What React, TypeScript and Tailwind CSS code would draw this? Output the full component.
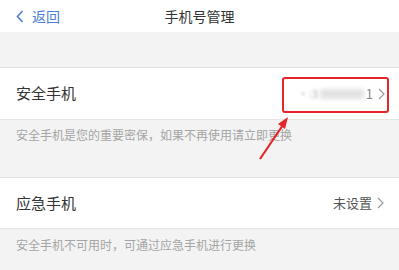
import React from "react";

const font = { fontFamily: '"Noto Sans CJK SC", "Noto Sans", sans-serif' };

function Chevron() {
  return (
    <svg width="7" height="12" viewBox="0 0 7 12" className="ml-[5px]">
      <path d="M1 1 L6 6 L1 11" fill="none" stroke="#9a9a9a" strokeWidth="1.2" />
    </svg>
  );
}

export default function App() {
  return (
    <div className="relative w-[399px] h-[270px] overflow-hidden bg-[#f3f3f3]" style={font}>
      <div className="h-[32px] bg-white flex items-center relative">
        <div className="flex items-center pl-[16px] text-[#4a7dd6] text-[14px]">
          <svg width="8" height="13" viewBox="0 0 8 13" className="mr-[8px]">
            <path d="M6.5 1 L1.5 6.5 L6.5 12" fill="none" stroke="#4a7dd6" strokeWidth="1.6" />
          </svg>
          <span>返回</span>
        </div>
        <div className="absolute left-0 right-0 text-center text-[14px] text-[#333] pointer-events-none">手机号管理</div>
      </div>
      <div className="h-[36px] border-b border-[#e2e2e2]" />
      <div className="h-[52px] bg-white flex items-center justify-between pl-[16px] pr-[14px] border-b border-[#e6e6e6]">
        <span className="text-[15px] text-[#333]">安全手机</span>
        <div className="flex items-center text-[13px] text-[#888]">
          <span className="blur-[1.5px] text-[#aaa] text-[11px]">·:3</span>
          <span className="ml-[2px] w-[44px] h-[10px] bg-[#e2e2e2] blur-[2px] rounded-[2px]" />
          <span className="ml-[2px]">1</span>
          <Chevron />
        </div>
      </div>
      <div className="h-[58px] border-b border-[#e2e2e2] pl-[16px] pt-[6px] text-[12px] text-[#a5a5a5]">
        安全手机是您的重要密保，如果不再使用请立即更换
      </div>
      <div className="h-[51px] bg-white flex items-center justify-between pl-[16px] pr-[15px] border-b border-[#e6e6e6]">
        <span className="text-[15px] text-[#333]">应急手机</span>
        <div className="flex items-center text-[13px] text-[#555]">
          <span>未设置</span>
          <Chevron />
        </div>
      </div>
      <div className="pl-[16px] pt-[7px] text-[12px] text-[#a5a5a5]">
        安全手机不可用时，可通过应急手机进行更换
      </div>
      <div className="absolute left-[282px] top-[77px] w-[107px] h-[36px] border-2 border-[#e4262a] rounded-[3px]" />
      <svg className="absolute left-0 top-0" width="399" height="270">
        <line x1="260" y1="159" x2="283" y2="125" stroke="#e4262a" strokeWidth="2.2" />
        <polygon points="288,117 278,124 285,129" fill="#e4262a" />
      </svg>
    </div>
  );
}
